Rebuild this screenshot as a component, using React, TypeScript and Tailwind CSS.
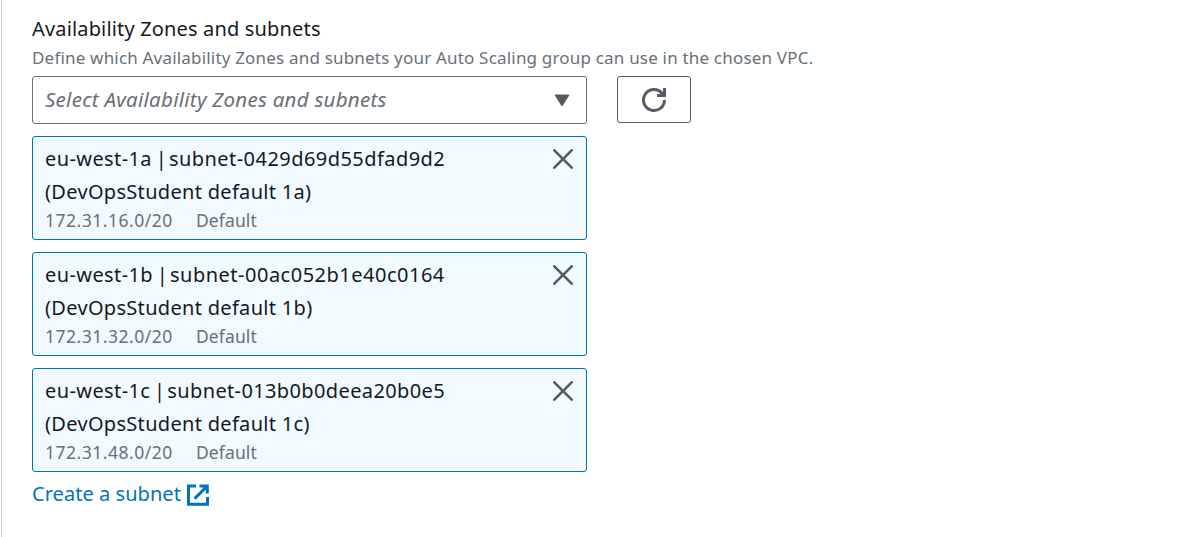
type Subnet = { zone: string; id: string; label: string; cidr: string; idClass: string };

const subnets: Subnet[] = [
  { zone: 'eu-west-1a', id: 'subnet-0429d69d55dfad9d2', label: '(DevOpsStudent default 1a)', cidr: '172.31.16.0/20', idClass: 'tracking-[0.45px]' },
  { zone: 'eu-west-1b', id: 'subnet-00ac052b1e40c0164', label: '(DevOpsStudent default 1b)', cidr: '172.31.32.0/20', idClass: 'tracking-[0.5px]' },
  { zone: 'eu-west-1c', id: 'subnet-013b0b0deea20b0e5', label: '(DevOpsStudent default 1c)', cidr: '172.31.48.0/20', idClass: 'tracking-[0.37px]' },
];

function CloseIcon() {
  return (
    <svg width="20" height="20" viewBox="0 0 20 20" fill="none" stroke="#545b64" strokeWidth="2.6" strokeLinecap="round">
      <path d="M1.3 1.3 18.7 18.7M18.7 1.3 1.3 18.7" />
    </svg>
  );
}

function RefreshIcon() {
  return (
    <svg width="26" height="26" viewBox="0 0 26 26" fill="none" stroke="#545b64" strokeWidth="3">
      <path d="M23.5 13A10.5 10.5 0 1 1 20.8 6L23.3 8.5" />
      <path d="M23.5 1V8.5H16" />
    </svg>
  );
}

function ExternalIcon() {
  return (
    <svg width="22" height="22" viewBox="0 0 22 22" fill="none" stroke="#0073bb" strokeWidth="3">
      <path d="M9 1.9H1.5V20.3H20.5V13" />
      <path d="M12.5 1.9H20.3V9.5M20 2.2 7.6 14.6" />
    </svg>
  );
}

function SubnetToken({ zone, id, label, cidr, idClass }: Subnet) {
  return (
    <li className="flex h-[104px] justify-between rounded-[3px] border border-[#0073bb] bg-[#f1faff] pt-[5px] pr-[13px] pl-3">
      <div className="whitespace-nowrap">
        <div className="h-[33px] text-[20px] leading-[33px] tracking-[0.4px]">
          {zone}
          <span className="tracking-[-1.5px]"> | </span>
          <span className={idClass}>{id}</span>
        </div>
        <div className="h-[33px] text-[20px] leading-[33px] tracking-[0.31px]">{label}</div>
        <div className="flex gap-[24px] text-[17.5px] leading-[24px] text-[#687078]">
          <span className="w-[127px] tracking-[0.5px]">{cidr}</span>
          <span className="tracking-[0.1px]">Default</span>
        </div>
      </div>
      <button aria-label="Remove" className="mt-[7px] h-5 w-5">
        <CloseIcon />
      </button>
    </li>
  );
}

export default function App() {
  return (
    <div className="h-[537px] w-[1198px] overflow-hidden bg-white pl-px font-['Noto_Sans',sans-serif] text-[#16191f]">
      <main className="h-full border-l border-[#ccc] pt-[12px] pl-[30px]">
        <h1 className="h-[33px] text-[20px] leading-[33px] tracking-[0.16px] whitespace-nowrap">Availability Zones and subnets</h1>
        <p className="h-[31px] text-[17px] leading-[25px] tracking-[0.19px] whitespace-nowrap text-[#687078]">
          Define which Availability Zones and subnets your Auto Scaling group can use in the chosen VPC.
        </p>
        <div className="flex gap-[30px]">
          <button className="flex h-12 w-[555px] items-center justify-between rounded-[3px] border border-[#687078] pr-4 pl-3">
            <span className="pb-[2px] text-[20.5px] leading-[33px] tracking-[0.27px] text-[#687078] italic">Select Availability Zones and subnets</span>
            <svg width="16" height="13" viewBox="0 0 16 13" fill="#545b64" stroke="#545b64" strokeLinejoin="round">
              <path d="M1 1H15L8 12Z" />
            </svg>
          </button>
          <button aria-label="Refresh" className="flex h-[47px] w-[74px] items-center justify-center rounded-[3px] border border-[#545b64]">
            <RefreshIcon />
          </button>
        </div>
        <ul className="mt-3 flex w-[555px] flex-col gap-3">
          {subnets.map((subnet) => (
            <SubnetToken key={subnet.id} {...subnet} />
          ))}
        </ul>
        <a className="mt-[6px] flex h-[33px] items-center gap-[6px] text-[20px] leading-[33px] tracking-[0.05px] text-[#0073bb]">
          <span className="pb-[2px]">Create a subnet</span>
          <ExternalIcon />
        </a>
      </main>
    </div>
  );
}
